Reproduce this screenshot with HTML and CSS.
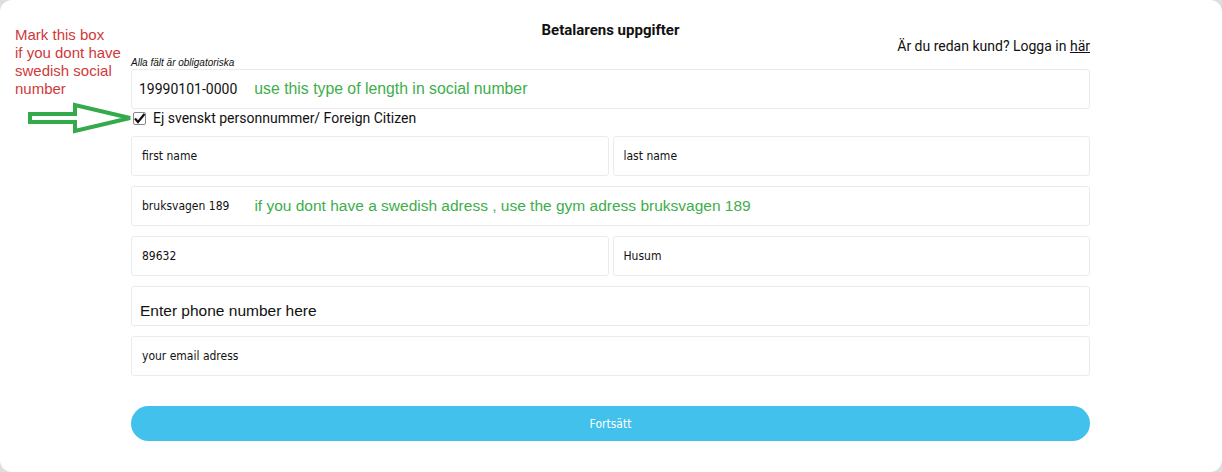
FILE: index.html
```html
<!DOCTYPE html>
<html lang="sv">
<head>
  <meta charset="UTF-8">
  <meta name="viewport" content="width=device-width, initial-scale=1.0">
  <title>Betalarens uppgifter</title>
  <link rel="stylesheet" href="styles.css">
</head>
<body>
  <div class="card">
    <p class="hint-red">Mark this box<br>if you dont have<br>swedish social<br>number</p>
    <svg class="hint-arrow" width="116" height="36" viewBox="0 0 116 36">
      <polygon points="6,14 51,14 51,5 106,18 51,31 51,22 6,22" fill="#fff" stroke="#34aa4a" stroke-width="4" stroke-linejoin="miter"/>
    </svg>

    <div class="form">
      <h1 class="title">Betalarens uppgifter</h1>
      <div class="login"><span>Är du redan kund? Logga in <a href="#">här</a></span></div>
      <p class="required">Alla fält är obligatoriska</p>

      <div class="field roboto">
        <span>19990101-0000</span>
        <span class="note social-note">use this type of length in social number</span>
      </div>

      <label class="check-row">
        <span class="checkbox">
          <svg width="13" height="13" viewBox="0 0 13 13"><path d="M2 6.5 L5 10 L11.5 2" fill="none" stroke="#111" stroke-width="2.2"/></svg>
        </span>
        Ej svenskt personnummer/ Foreign Citizen
      </label>

      <div class="pair">
        <div class="field">first name</div>
        <div class="field">last name</div>
      </div>

      <div class="field">
        <span>bruksvagen 189</span>
        <span class="note">if you dont have a swedish adress , use the gym adress bruksvagen 189</span>
      </div>

      <div class="pair">
        <div class="field">89632</div>
        <div class="field">Husum</div>
      </div>

      <div class="field phone">Enter phone number here</div>
      <div class="field">your email adress</div>

      <button class="next">Fortsätt</button>
    </div>
  </div>
</body>
</html>
```

FILE: styles.css
```css
body {
  margin: 0;
  background: #dedede;
  font-family: 'Roboto', sans-serif;
  color: #111;
}

.card {
  position: relative;
  height: 472px;
  background: #fff;
  border-radius: 12px;
  overflow: hidden;
}

.hint-red {
  position: absolute;
  left: 15px;
  top: 26px;
  margin: 0;
  font-family: 'Liberation Sans', Arial, sans-serif;
  font-size: 15px;
  line-height: 18px;
  color: #d0393b;
}

.hint-arrow {
  position: absolute;
  left: 24px;
  top: 100px;
}

.form {
  width: 959px;
  margin-left: 131px;
  padding-top: 21px;
}

.title {
  margin: 0;
  font-size: 15px;
  font-weight: 700;
  line-height: 18px;
  text-align: center;
}

.login {
  display: flex;
  justify-content: flex-end;
  margin-top: -2px;
  font-size: 14px;
  line-height: 18px;
}

.login a {
  color: #111;
}

.required {
  margin: 2px 0 0;
  font-family: 'Liberation Sans', Arial, sans-serif;
  font-style: italic;
  font-size: 10px;
  line-height: 12px;
}

.field {
  display: flex;
  align-items: center;
  height: 40px;
  box-sizing: border-box;
  padding: 0 10px;
  border: 1px solid #ebebeb;
  border-radius: 3px;
  font-family: 'DejaVu Sans Condensed', 'DejaVu Sans', sans-serif;
  font-size: 12px;
  margin-bottom: 10px;
}

.field.roboto {
  padding-left: 7px;
  font-family: 'Roboto', sans-serif;
  font-size: 14px;
  margin-bottom: 0;
}

.field.phone {
  padding-left: 8px;
  padding-top: 10px;
  font-family: 'Liberation Sans', Arial, sans-serif;
  font-size: 15.5px;
}

.note {
  margin-left: 25px;
  font-family: 'Liberation Sans', Arial, sans-serif;
  font-size: 15.5px;
  color: #3dae4b;
}

.social-note {
  margin-left: 17px;
  font-size: 15.8px;
}

.check-row {
  display: flex;
  align-items: center;
  gap: 7px;
  height: 18px;
  margin: 0 0 9px 2px;
  font-size: 14px;
}

.checkbox {
  display: flex;
  width: 13px;
  height: 13px;
  box-sizing: border-box;
  border: 1px solid #888;
  border-radius: 2px;
  background: #fff;
}

.checkbox svg {
  margin: -1px;
}

.pair {
  display: grid;
  grid-template-columns: 1fr 1fr;
  gap: 4px;
}

.next {
  display: block;
  width: 100%;
  height: 35px;
  margin-top: 30px;
  border: none;
  border-radius: 18px;
  background: #43c1ed;
  color: #fff;
  font-family: 'DejaVu Sans Condensed', 'DejaVu Sans', sans-serif;
  font-size: 12px;
}
```
